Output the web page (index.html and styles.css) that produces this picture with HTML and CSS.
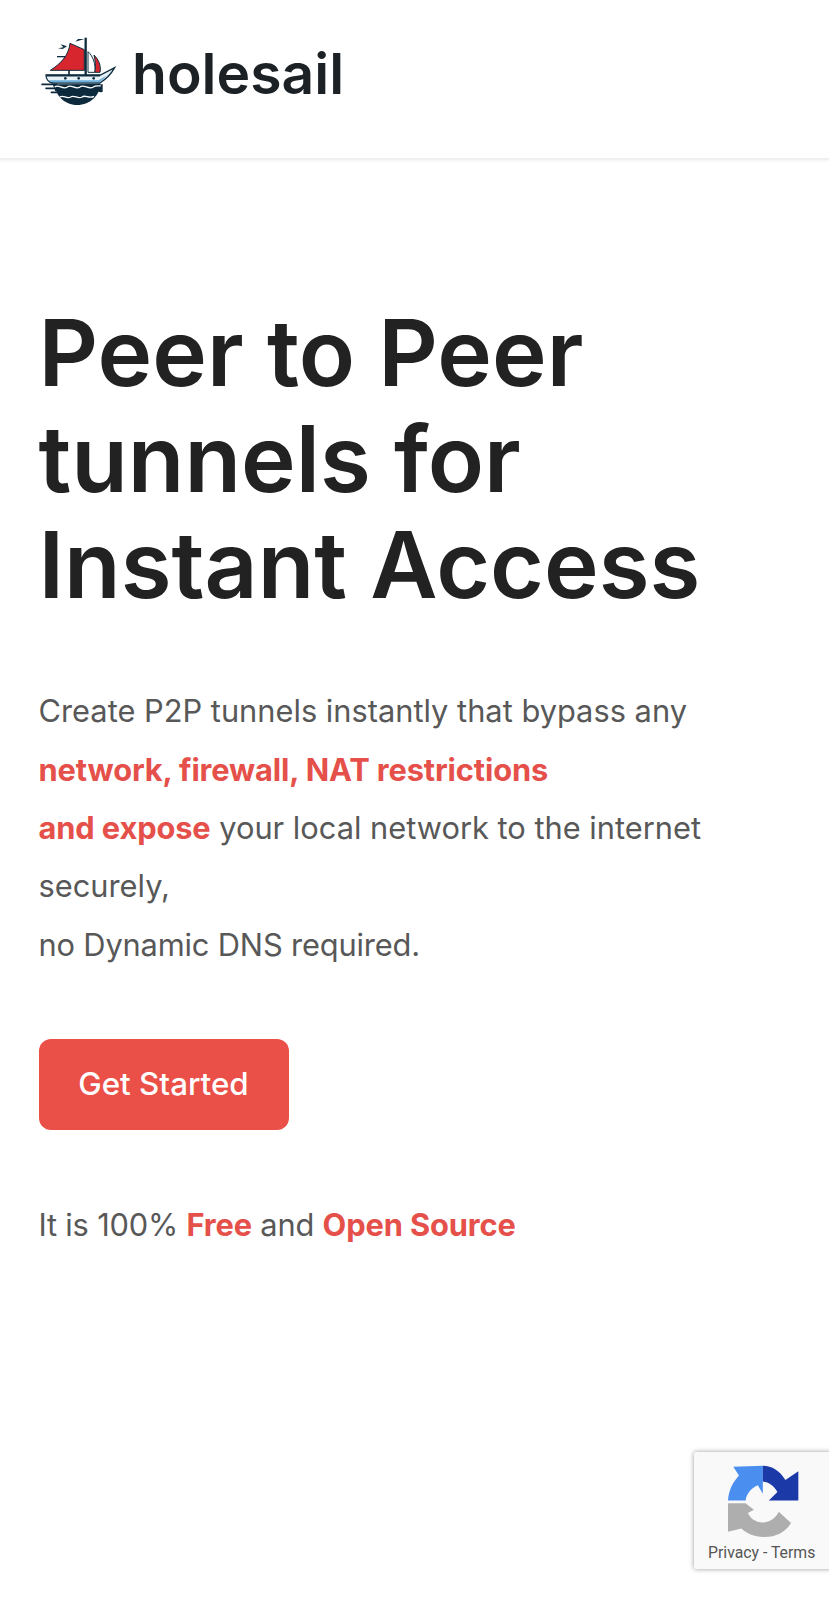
FILE: index.html
```html
<!DOCTYPE html>
<html lang="en">
<head>
<meta charset="utf-8">
<title>holesail</title>
<link rel="stylesheet" href="styles.css">
</head>
<body>
<header class="topbar">
  <a class="brand" href="#">
    <svg class="logo" viewBox="0 0 270 270" aria-hidden="true">
      <path d="M72 180 C66 208 98 240 135 240 C175 240 206 208 204 176 Z" fill="#0d2a3c"/>
      <path d="M42 150 H205 L248 128 C238 146 226 160 204 174 H62 C50 172 42 162 42 150 Z" fill="#e6f1f8" stroke="#0f2d3f" stroke-width="4"/>
      <path d="M50 166 H200 L222 152 C216 160 210 166 202 172 H66 C58 171 54 169 50 166 Z" fill="#6aaedb"/>
      <path d="M44 152 H204" stroke="#0f2d3f" stroke-width="5"/>
      <path d="M30 178 H74 M42 190 H78 M58 202 H84" stroke="#0d2a3c" stroke-width="5" stroke-linecap="round"/>
      <path d="M62 178 H212 V200 C205 204 200 200 195 199 H70 Z" fill="#0d2a3c"/>
      <path d="M68 186 C80 176 92 196 106 186 C118 176 130 196 144 186 C156 176 170 196 184 186 C192 180 200 184 206 182" fill="none" stroke="#fff" stroke-width="4"/>
      <path d="M84 216 C94 208 104 224 116 216 C126 208 138 224 150 216 C160 208 170 222 186 214" fill="none" stroke="#fff" stroke-width="4"/>
      <path d="M55 136 C86 116 110 92 114 55 L157 74 V136 Z" fill="#d8262e" stroke="#0f2d3f" stroke-width="3"/>
      <path d="M186 90 C200 104 208 122 204 142 H188 C192 124 190 106 186 90 Z" fill="#d8262e" stroke="#0f2d3f" stroke-width="3"/>
      <path d="M168 80 C184 94 192 120 188 142 H168 Z" fill="#fff" stroke="#0f2d3f" stroke-width="3"/>
      <path d="M111 136 V150" stroke="#0f2d3f" stroke-width="5"/>
      <path d="M161 38 V150" stroke="#0f2d3f" stroke-width="7"/>
      <path d="M157 42 L130 50 L138 42 Z M105 64 L86 58 L94 67 L78 70 L92 72 Z" fill="#0f2d3f"/>
      <path d="M75 95 H100" stroke="#0f2d3f" stroke-width="4"/>
      <circle cx="100" cy="160" r="4" fill="#0f2d3f"/><circle cx="140" cy="160" r="4" fill="#0f2d3f"/><circle cx="185" cy="160" r="4" fill="#0f2d3f"/>
    </svg>
    <span class="brand-name">holesail</span>
  </a>
</header>
<main class="hero">
  <h1 class="title">Peer to Peer tunnels for Instant&nbsp;Access</h1>
  <p class="lead">Create P2P tunnels instantly that bypass any<br>
    <strong class="accent">network, firewall, NAT restrictions</strong><br>
    <strong class="accent">and expose</strong> your local network to the internet securely,<br>
    <span class="tight">no Dynamic DNS required.</span></p>
  <a class="cta" href="#">Get Started</a>
  <p class="note">It is 100% <strong class="accent">Free</strong> and <strong class="accent">Open Source</strong></p>
</main>
<aside class="recaptcha">
  <svg class="recaptcha-icon" viewBox="170 105 215 220" aria-hidden="true">
    <path d="M172 212 C174 182 186 158 205 137 L188 110 L277 107 V192 L262 166 C243 174 228 190 225 212 Z" fill="#4a8ef0"/>
    <path d="M277 107 C305 107 328 122 345 150 L384 124 V212 H295 L321 186 C310 168 296 157 277 155 Z" fill="#1b3aa8"/>
    <path d="M172 220 H225 L250 240 L232 250 C240 268 258 280 280 278 C302 276 316 264 325 246 L362 280 C345 308 315 323 280 322 C250 321 228 310 212 296 L172 306 Z" fill="#aeaeae"/>
  </svg>
  <span class="recaptcha-links">Privacy - Terms</span>
</aside>
</body>
</html>
```
FILE: styles.css
```css
* { box-sizing: border-box; }
html, body { margin: 0; padding: 0; }
body {
  position: relative;
  height: 1600px;
  overflow: hidden;
  background: #fff;
  font-family: Inter, "Liberation Sans", sans-serif;
  color: #212121;
}
.topbar {
  height: 160px;
  padding: 30px 30px 0;
  border-bottom: 2px solid #f0f0f0;
  box-shadow: 0 1px 3px rgba(0,0,0,.05);
}
.brand {
  display: flex;
  align-items: center;
  gap: 12px;
  color: #1c2126;
  text-decoration: none;
}
.logo { width: 90px; height: 90px; display: block; margin-top: -5px; margin-left: 2px; margin-right: -2px; }
.brand-name { font-size: 57px; font-weight: 600; line-height: 76px; margin-top: 3px; }
.hero { padding: 140px 38.5px 0; }
.title {
  margin: 0;
  font-size: 92.5px;
  line-height: 105.8px;
  font-weight: 600;
  color: #222;
}
.lead {
  margin: 65px 0 0;
  font-size: 30.8px;
  line-height: 58.3px;
  color: #585858;
}
.accent { color: #e5504a; font-weight: 700; letter-spacing: -.12px; }
.tight { letter-spacing: -.16px; }
.cta {
  display: flex;
  align-items: center;
  justify-content: center;
  width: 250px;
  height: 91px;
  margin-top: 65px;
  border-radius: 12px;
  background: #eb5048;
  color: #fff;
  font-size: 31.3px;
  font-weight: 500;
  text-decoration: none;
}
.note {
  margin: 66px 0 0;
  font-size: 30.8px;
  line-height: 58px;
  color: #585858;
  letter-spacing: -.2px;
}
.recaptcha {
  position: absolute;
  left: 694px;
  top: 1452px;
  width: 145px;
  height: 117px;
  padding: 13px 0 0 33px;
  background: #f9f9f9;
  border-radius: 2px;
  box-shadow: 0 0 5px rgba(0,0,0,.4);
  font-family: Roboto, sans-serif;
}
.recaptcha-icon { display: block; width: 72px; height: 73px; }
.recaptcha-links {
  position: absolute;
  left: 14px;
  top: 91px;
  font-size: 15.8px;
  line-height: 20px;
  color: #555;
  white-space: nowrap;
}
```
